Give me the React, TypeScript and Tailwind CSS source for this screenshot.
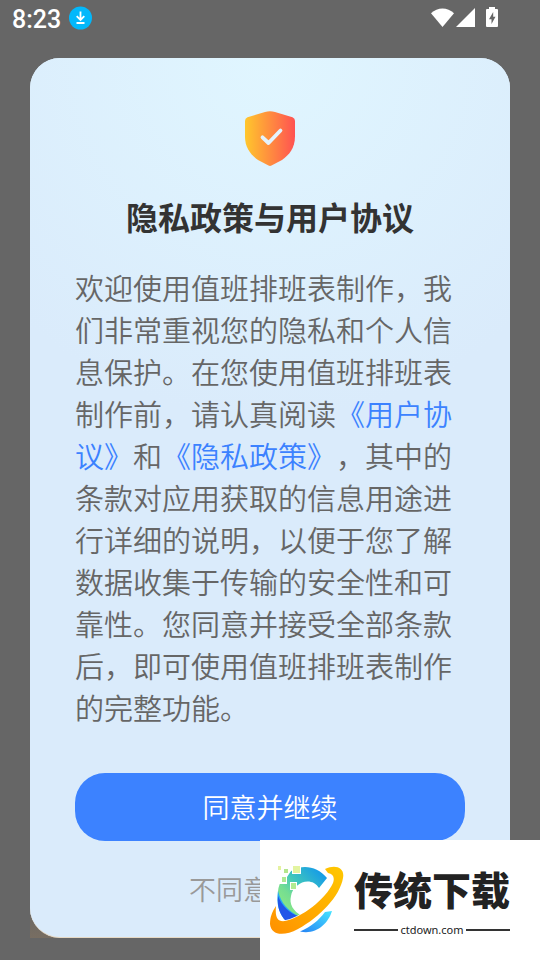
function StatusBar() {
  return (
    <header className="flex h-9 items-start justify-between pl-3 pr-10 pt-1">
      <div className="flex items-center gap-2">
        <span className="font-['Roboto',sans-serif] text-[25px] font-medium leading-8 text-white">
          8:23
        </span>
        <svg className="mb-1 size-6" viewBox="0 0 24 24" aria-hidden="true">
          <circle cx="11.5" cy="12" r="11.5" fill="#03b8fb" />
          <path
            d="M11.5 5.500v8.500M7.700 10.200l3.800 3.800 3.800-3.800M7.500 17h8"
            fill="none"
            stroke="#fff"
            strokeWidth="1.800"
          />
        </svg>
      </div>
      <svg className="mt-0.5 h-6 w-[70px]" viewBox="0 0 70 24" fill="#fff" aria-hidden="true">
        <path d="M1 7.200C7.500.9 17.500.9 24 7.200L12.500 21z" />
        <path d="M26 21L45 2v19z" />
        <path
          fillRule="evenodd"
          d="M59 1h6v2h2q1 0 1 1v16q0 1-1 1H57q-1 0-1-1V4q0-1 1-1h2zM63.200 6L59 13.200h2.500V18l4-7.200h-2.300z"
        />
      </svg>
    </header>
  );
}

function Shield() {
  return (
    <svg className="h-[55px] w-[50px]" viewBox="0 0 50 55" aria-hidden="true">
      <defs>
        <linearGradient id="shield" x1="0" x2="1" y1="0" y2="0">
          <stop offset="0" stopColor="#ffc72c" />
          <stop offset="1" stopColor="#ff5252" />
        </linearGradient>
      </defs>
      <path
        d="M20 .9q5-1.500 10 0L47.500 6.300Q50 7.200 50 10v15.500C50 37 44 44 37 49l-10.500 5.600q-1.500.8-3 0L13 49C6 44 0 37 0 25.500V10Q0 7.200 2.500 6.300z"
        fill="url(#shield)"
      />
      <path
        d="M17.500 26.300l6 5.700L35.500 19.500"
        fill="none"
        stroke="#e4f3fd"
        strokeWidth="3.800"
        strokeLinecap="round"
        strokeLinejoin="round"
      />
    </svg>
  );
}

function SiteLogo() {
  return (
    <svg className="h-[72px] w-[76px] shrink-0" viewBox="0 0 76 72" aria-hidden="true">
      <defs>
        <linearGradient id="arc" x1="1" x2="0" y1="0" y2="1">
          <stop offset=".1" stopColor="#159be8" />
          <stop offset=".45" stopColor="#3fc6bd" />
          <stop offset=".65" stopColor="#74dd92" />
          <stop offset="1" stopColor="#9af07c" />
        </linearGradient>
        <linearGradient id="ring" x1="1" x2="0" y1="0" y2="1">
          <stop offset="0" stopColor="#ffc800" />
          <stop offset="1" stopColor="#ff9000" />
        </linearGradient>
        <linearGradient id="tail" x1="1" x2="0" y1="0" y2="1">
          <stop offset="0" stopColor="#46e4ff" />
          <stop offset="1" stopColor="#2583f5" />
        </linearGradient>
      </defs>
      <path
        d="M57 14C48 3 34 0 23 6 13 11 7 21 8 32c2 12 10 20 20 23l4-3C23 47 19 40 21 32c2-13 20-21 28-8z"
        fill="url(#arc)"
      />
      <path d="M8 27c3 12 10 20 22 26l-14 4C9 50 6 40 8 27z" fill="#27aaf5" />
      <path d="M8 32c4 10 11 17 22 21l-14 4C10 51 7 43 8 32z" fill="#2156e8" />
      <path d="M62 47C58 60 46 71 30 67.500 42 62 48 57 55 48z" fill="url(#tail)" />
      <path
        d="M55 5C66 0 75 4 73 14 70 32 50 53 28 65 13 73 1 71 0 60c0-7 2-12 6-18-1 11 1 16 9 15 16-3 41-22 48-38 2-6 0-9-5-10z"
        fill="url(#ring)"
        stroke="#fff"
        strokeWidth="1.500"
        paintOrder="stroke"
      />
      <path d="M7 1h14v6l-4 6v7H7z" fill="#fff" />
      <g stroke="#fff" strokeWidth="2" paintOrder="stroke">
        <path d="M23 2h7v7h-7z" fill="#e3f4a0" />
        <path d="M14 5h4v4h-4z" fill="#b4e68d" />
        <path d="M12 13h4v5h-4z" fill="#aee993" />
        <path d="M21 19h5v6h-5z" fill="#b2eb91" />
      </g>
      <path d="M8 2h3v4H8z" fill="#e5f2a0" />
    </svg>
  );
}

function SiteBadge() {
  return (
    <aside className="absolute bottom-0 right-0 flex h-[120px] w-[280px] items-center bg-white pl-[10px]">
      <SiteLogo />
      <div className="ml-2 flex w-[156px] flex-col">
        <span className="whitespace-nowrap text-[39px] font-black leading-[52px] text-[#222]">
          传统下载
        </span>
        <span className="flex items-center gap-0.5 pt-2">
          <i className="h-0.5 flex-1 bg-[#333]" />
          <span className="font-['Noto_Sans',sans-serif] text-[11px] leading-4 text-[#222]">
            ctdown.com
          </span>
          <i className="h-0.5 flex-1 bg-[#333]" />
        </span>
      </div>
    </aside>
  );
}

export default function App() {
  return (
    <div
      lang="zh-CN"
      className="relative min-h-screen bg-[#666] font-['Noto_Sans_CJK_SC',sans-serif]"
    >
      <StatusBar />
      <div className="mx-[30px] mt-[22px] bg-[linear-gradient(to_top,#786e62_0,#666_36px)]">
        <main className="flex flex-col items-center rounded-[30px] border-b border-[#e6d9c5] bg-[#daebfb] bg-[radial-gradient(circle_at_50%_0,#e0f6ff_0,#daebfb_360px)] px-[45px] pb-4 pt-[53px]">
          <Shield />
          <h1 className="mt-[26px] text-[32px] font-bold leading-[48px] text-[#333]">
            隐私政策与用户协议
          </h1>
          <p className="mt-[26px] w-full text-[29px] font-[350] leading-[42px] text-[#666] [text-spacing-trim:space-all]">
            欢迎使用值班排班表制作，我们非常重视您的隐私和个人信息保护。在您使用值班排班表制作前，请认真阅读
            <a href="#agreement" className="text-[#3c82ff]">《用户协议》</a>和
            <a href="#privacy" className="text-[#3c82ff]">《隐私政策》</a>
            ，其中的条款对应用获取的信息用途进行详细的说明，以便于您了解数据收集于传输的安全性和可靠性。您同意并接受全部条款后，即可使用值班排班表制作的完整功能。
          </p>
          <button
            type="button"
            className="mt-[45px] h-[68px] w-full rounded-[30px] bg-[#3c82ff] text-[27px] font-[350] text-white"
          >
            同意并继续
          </button>
          <button type="button" className="mt-4 h-16 w-full text-[27px] font-[350] text-[#999]">
            不同意并退出
          </button>
        </main>
      </div>
      <SiteBadge />
    </div>
  );
}
